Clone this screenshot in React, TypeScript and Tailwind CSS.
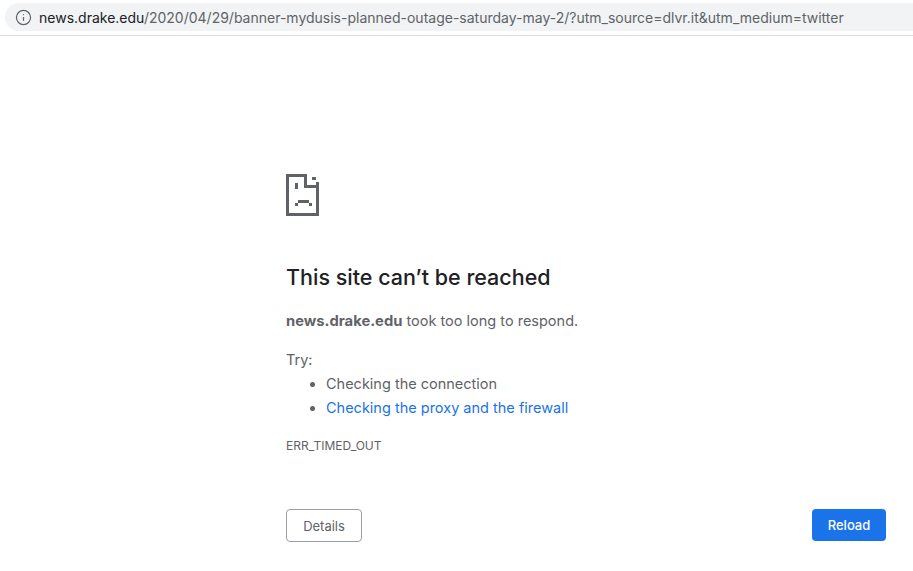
import { Info } from "lucide-react";

function SadTab() {
  return (
    <svg width="33" height="42" viewBox="0 0 33 42" fill="#5f6368" shapeRendering="crispEdges">
      <rect x="0" y="0" width="3" height="42" />
      <rect x="0" y="0" width="21" height="3" />
      <rect x="18" y="0" width="3" height="14" />
      <rect x="18" y="11" width="15" height="3" />
      <rect x="30" y="8" width="3" height="34" />
      <rect x="0" y="39" width="33" height="3" />
      <rect x="26" y="3" width="4" height="3" />
      <rect x="9" y="9" width="3" height="6" />
      <rect x="12" y="26" width="11" height="3" />
      <rect x="9" y="29" width="3" height="3" />
      <rect x="23" y="29" width="3" height="3" />
    </svg>
  );
}

export default function App() {
  return (
    <div className="h-[571px] w-[913px] overflow-hidden bg-white font-['Inter','Liberation_Sans',sans-serif] text-[#5f6368]">
      {/* Address bar */}
      <header className="h-9 border-b border-[#dadce0] pl-[5px] pt-[3px]">
        <div className="flex h-[28px] items-center gap-[7px] rounded-l-full bg-[#f1f3f4] pl-[10px]">
          <Info size={17} strokeWidth={1.7} className="text-[#5f6368]" />
          <div className="whitespace-nowrap pt-[1px] text-[14px] text-[#5f6368]">
            <span className="text-[#202124]">news.drake.edu</span>
            /2020/04/29/banner-mydusis-planned-outage-saturday-may-2/?utm_source=dlvr.it&amp;utm_medium=twitter
          </div>
        </div>
      </header>

      {/* Error page */}
      <main className="pl-[286px] pr-[27px] pt-[138px]">
        <SadTab />
        <h1 className="mt-[45px] text-[21.5px] font-[450] leading-[32px] text-[#202124]">
          This site can’t be reached
        </h1>
        <p className="mt-[16px] text-[14.5px] leading-[24px]">
          <b className="text-[14.75px] font-bold">news.drake.edu</b> took too long to respond.
        </p>
        <p className="mt-[15px] text-[14.5px] leading-[24px]">Try:</p>
        <ul className="list-disc pl-[40px] text-[14.5px] leading-[24px]">
          <li>Checking the connection</li>
          <li className="marker:text-[#5f6368]">
            <a className="text-[#1a73e8]">Checking the proxy and the firewall</a>
          </li>
        </ul>
        <div className="mt-[18px] text-[12px] leading-[16px]">ERR_TIMED_OUT</div>
        <div className="mt-[55px] flex items-start justify-between">
          <button className="flex h-[33px] w-[76px] items-center justify-center rounded border border-[#9aa0a6] pt-[2px] text-[13px] text-[#5f6368]">
            Details
          </button>
          <button className="flex h-[32px] w-[74px] items-center justify-center rounded bg-[#1a73e8] pt-[1px] text-[13px] font-medium text-white">
            Reload
          </button>
        </div>
      </main>
    </div>
  );
}
